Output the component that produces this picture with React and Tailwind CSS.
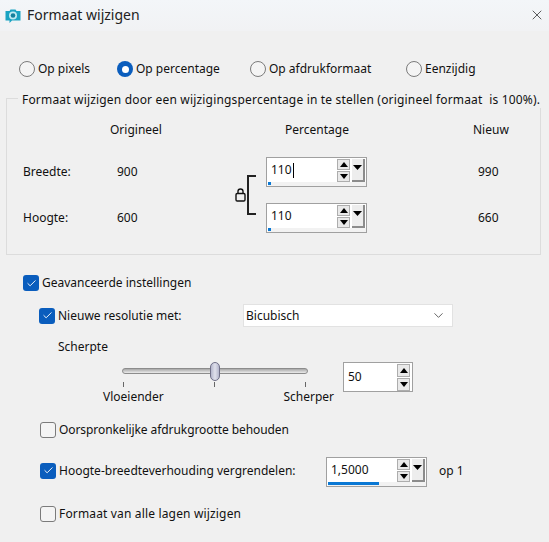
import { X, Check, ChevronDown } from 'lucide-react';

const Radio = ({ checked, label, className = '' }) => (
  <div className={`flex items-center gap-[3px] ${className}`}>
    {checked ? (
      <span className="w-4 h-4 rounded-full bg-[#0a5dbd] flex items-center justify-center">
        <span className="w-[7px] h-[7px] rounded-full bg-white"></span>
      </span>
    ) : (
      <span className="w-4 h-4 rounded-full border border-[#7b7b7b] bg-[#f4f4f4]"></span>
    )}
    <span>{label}</span>
  </div>
);

const CheckBox = ({ checked, label, className = '', labelClass = '' }) => (
  <div className={`flex items-center gap-[3px] ${className}`}>
    {checked ? (
      <span className="w-4 h-4 rounded-[3px] bg-[#0a5dbd] flex items-center justify-center">
        <Check size={11} color="#fff" strokeWidth={2} />
      </span>
    ) : (
      <span className="w-4 h-4 rounded-[3px] border border-[#7b7b7b] bg-[#f4f4f4]"></span>
    )}
    <span className={`whitespace-nowrap ${labelClass}`}>{label}</span>
  </div>
);

const Arrow = ({ up, w = 8 }) => (
  <svg width={w} height="5" viewBox="0 0 8 5" preserveAspectRatio="none">
    <path d={up ? 'M4 0 L8 5 L0 5 Z' : 'M0 0 L8 0 L4 5 Z'} fill="#000" />
  </svg>
);

const Steppers = ({ tall }) => {
  const size = tall ? 'h-[13px]' : 'h-[11px]';
  return (
    <div className="flex flex-col gap-[1px]">
      <span className={`w-[13px] ${size} border border-[#adadad] bg-[#e9e9e9] flex items-center justify-center`}><Arrow up /></span>
      <span className={`w-[13px] ${size} border border-[#adadad] bg-[#e9e9e9] flex items-center justify-center`}><Arrow /></span>
    </div>
  );
};

// numeric field with stepper buttons + slider dropdown button
const SpinBox = ({ value, fill, caret }) => (
  <div className="relative w-[101px] h-[30px] border border-[#a0a0a0] bg-white flex items-center pl-[4px] pb-[4px] pr-[1px]">
    <span className="flex-1 text-[#111]">
      {value}
      {caret && <span className="inline-block w-px h-[15px] bg-black align-middle ml-px"></span>}
    </span>
    <Steppers />
    <span className="ml-[2px] w-[13px] h-[23px] bg-[#ededed] border-r-2 border-b-2 border-[#8c8c8c] flex items-start justify-center pt-[6px]">
      <Arrow w={9} />
    </span>
    <span className="absolute left-[1px] right-0 bottom-0 h-[4px] bg-[#f2f2f2]"></span>
    <span className="absolute left-[1px] bottom-[1px] h-[3px] bg-[#0a78d4]" style={{ width: fill }}></span>
  </div>
);

const Lock = () => (
  <svg width="11" height="14" viewBox="0 0 11 14" fill="none" stroke="#111" strokeWidth="1.4">
    <path d="M3 6 V3.2 C3 1.8 3.9 1 5.5 1 C7.1 1 8 1.8 8 3.2 V6" />
    <rect x="1" y="5.5" width="9" height="7.5" rx="1.2" fill="#f0f0f0" />
  </svg>
);

const App = () => {
  return (
    <div
      className="w-[549px] h-[542px] overflow-hidden bg-[#f0f0f0] text-[12px] leading-4 text-[#111]"
      style={{ fontFamily: '"Noto Sans", sans-serif' }}
    >
      {/* Title bar */}
      <div className="h-[31px] bg-gradient-to-b from-[#f3f6f9] to-[#f1f2f4] flex items-center pl-[5px] pr-[4px]">
        <svg width="16" height="16" viewBox="0 0 16 16">
          <path d="M0.5 3 H4.5 L5.5 1.5 H10.5 L11.5 3 H15.5 V12.5 H7 L4.5 15 V12.5 H0.5 Z" fill="#1aa3c2" />
          <circle cx="8" cy="7.5" r="4" fill="#bfeaf2" />
          <circle cx="8" cy="7.5" r="2.3" fill="#14809c" />
        </svg>
        <span className="ml-[6px] text-[14px] text-[#222] -mt-[1px]">Formaat wijzigen</span>
        <X size={16} strokeWidth={1.1} color="#222" className="ml-auto -mt-[1px]" />
      </div>

      {/* Mode radios */}
      <div className="flex pl-[19px] mt-[30px] h-4">
        <Radio label="Op pixels" className="w-[98px]" />
        <Radio checked label="Op percentage" className="w-[133px]" />
        <Radio label="Op afdrukformaat" className="w-[156px]" />
        <Radio label="Eenzijdig" />
      </div>

      {/* Group box */}
      <div className="relative ml-[6px] mt-[21px] w-[535px] h-[157px] border border-[#dcdcdc]">
        <span className="absolute left-[11px] -top-[7px] px-[4px] bg-[#f0f0f0] whitespace-nowrap tracking-[0.18px]">
          Formaat wijzigen door een wijzigingspercentage in te stellen (origineel formaat&nbsp; is 100%).
        </span>
        <div className="flex pl-[16px] pt-[23px]">
          <span className="w-[87px]"></span>
          <span className="w-[175px]">Origineel</span>
          <span className="w-[188px]">Percentage</span>
          <span>Nieuw</span>
        </div>
        <div className="flex pl-[16px] mt-[19px]">
          <div className="w-[77px] flex flex-col">
            <span className="h-[30px] flex items-center">Breedte:</span>
            <span className="h-[30px] flex items-center mt-[16px]">Hoogte:</span>
          </div>
          <div className="w-[60px] flex flex-col">
            <span className="h-[30px] flex items-center pl-[17px]">900</span>
            <span className="h-[30px] flex items-center mt-[16px] pl-[17px]">600</span>
          </div>
          <div className="w-[106px] pl-[75px] flex items-center">
            <Lock />
            <span className="ml-[1px] w-[9px] h-[40px] shrink-0 border-l-2 border-t-2 border-b-2 border-[#222]"></span>
          </div>
          <div className="flex flex-col gap-[16px]">
            <SpinBox value="110" caret fill={3} />
            <SpinBox value="110" fill={3} />
          </div>
          <div className="flex flex-col pl-[111px]">
            <span className="h-[30px] flex items-center">990</span>
            <span className="h-[30px] flex items-center mt-[16px]">660</span>
          </div>
        </div>
      </div>

      {/* Advanced settings */}
      <CheckBox checked label="Geavanceerde instellingen" className="ml-[23px] mt-[20px]" />

      <div className="flex items-center ml-[39px] mt-[13px] h-[23px]">
        <CheckBox checked label="Nieuwe resolutie met:" className="w-[204px]" />
        <div className="w-[210px] h-[23px] bg-white border border-[#e2e2e2] flex items-center px-[2px] justify-between">
          <span>Bicubisch</span>
          <ChevronDown size={15} strokeWidth={1.2} color="#333" className="mr-[4px]" />
        </div>
      </div>

      {/* Sharpness */}
      <div className="ml-[58px] mt-[12px]">Scherpte</div>
      <div className="flex ml-[102px] mt-[7px]">
        <div className="w-[226px] h-[44px]">
          <div className="relative mt-[6px] ml-[20px] w-[186px] h-[6px] rounded-full border border-[#8c8c8c] bg-gradient-to-b from-[#a8a8a8] to-[#ececec]">
            <span className="absolute left-[87px] -top-[7px] w-[10px] h-[19px] rounded-[5px] border border-[#707088] bg-gradient-to-r from-[#b4b6cc] via-[#e0e1ec] to-[#b4b6cc]"></span>
          </div>
          <div className="flex justify-between ml-[21px] w-[183px] mt-[8px]">
            <span className="w-px h-[5px] bg-[#666]"></span>
            <span className="w-px h-[5px] bg-[#666]"></span>
            <span className="w-px h-[5px] bg-[#666]"></span>
          </div>
          <div className="flex justify-between ml-[1px] w-[231px] mt-[2px]">
            <span>Vloeiender</span>
            <span>Scherper</span>
          </div>
        </div>
        <div className="ml-[15px] w-[70px] h-[30px] border border-[#a0a0a0] bg-white flex items-center pl-[4px] pr-[2px]">
          <span className="flex-1">50</span>
          <Steppers tall />
        </div>
      </div>

      <CheckBox label="Oorspronkelijke afdrukgrootte behouden" className="ml-[40px] mt-[16px]" labelClass="tracking-[-0.08px]" />

      <div className="flex items-center ml-[40px] mt-[19px] h-[30px]">
        <CheckBox checked label="Hoogte-breedteverhouding vergrendelen:" className="w-[286px] -mt-[3px]" />
        <SpinBox value="1,5000" fill={51} />
        <span className="ml-[12px] -mt-[2px]">op 1</span>
      </div>

      <CheckBox label="Formaat van alle lagen wijzigen" className="ml-[40px] mt-[19px]" labelClass="tracking-[0.16px]" />
    </div>
  );
};

export default App;
